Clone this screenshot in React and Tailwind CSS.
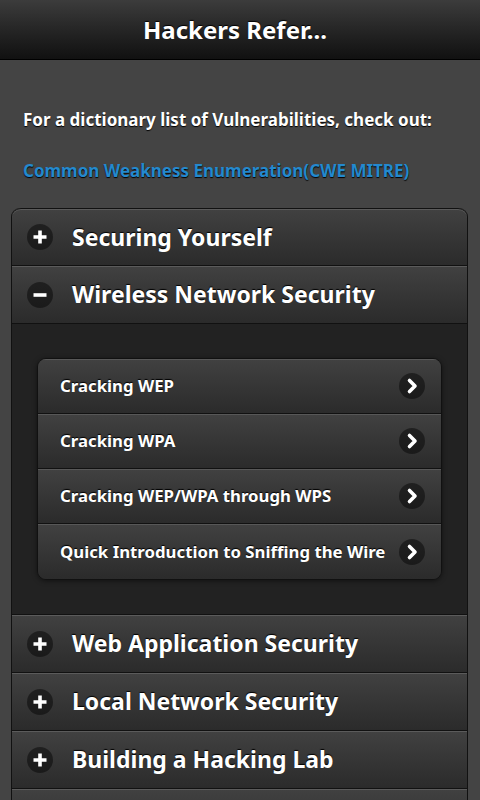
import React from 'react';

const sections = [
  { title: 'Securing Yourself', open: false },
  {
    title: 'Wireless Network Security',
    open: true,
    items: [
      'Cracking WEP',
      'Cracking WPA',
      'Cracking WEP/WPA through WPS',
      'Quick Introduction to Sniffing the Wire',
    ],
  },
  { title: 'Web Application Security', open: false },
  { title: 'Local Network Security', open: false },
  { title: 'Building a Hacking Lab', open: false },
  // next row only peeks in at the bottom of the screen
  { title: '', open: false },
];

const PlusIcon = () => (
  <svg width="26" height="26" viewBox="0 0 26 26">
    <circle cx="13" cy="13" r="13" fill="rgba(0,0,0,0.45)" />
    <path d="M13 6.5v13M6.5 13h13" stroke="#fff" strokeWidth="3.6" strokeLinecap="butt" />
  </svg>
);

const MinusIcon = () => (
  <svg width="26" height="26" viewBox="0 0 26 26">
    <circle cx="13" cy="13" r="13" fill="rgba(0,0,0,0.45)" />
    <path d="M6.5 13h13" stroke="#fff" strokeWidth="3.6" strokeLinecap="butt" />
  </svg>
);

const ArrowIcon = () => (
  <svg width="26" height="26" viewBox="0 0 26 26">
    <circle cx="13" cy="13" r="13" fill="rgba(0,0,0,0.45)" />
    <path d="M10.5 7.5l5.5 5.5-5.5 5.5" fill="none" stroke="#fff" strokeWidth="3.6" strokeLinecap="round" strokeLinejoin="round" />
  </svg>
);

const SectionHeader = ({ title, open, first }) => (
  <div
    className={`flex items-center h-[58px] border-b border-[#111] bg-linear-to-b from-[#414141] to-[#2b2b2b] shadow-[inset_0_1px_0_rgba(255,255,255,0.14)] pl-[15px] ${
      first ? 'rounded-t-[9px] border-t' : ''
    }`}
  >
    {title && (
      <>
        {open ? <MinusIcon /> : <PlusIcon />}
        <span className="ml-[19px] text-[23px] font-bold text-white [text-shadow:0_-1px_1px_#000] leading-none">
          {title}
        </span>
      </>
    )}
  </div>
);

export default function App() {
  return (
    <div className="min-h-[800px] bg-[#444] font-['Noto_Sans','Open_Sans',sans-serif]">
      <div className="h-[60px] flex items-center justify-center border-b border-black bg-linear-to-b from-[#3c3c3c] to-[#111]">
        <h1 className="text-[24px] font-bold text-white [text-shadow:0_-1px_1px_#000] -ml-[10px]">
          Hackers Refer...
        </h1>
      </div>

      <div className="px-[11px] pt-[48px] pb-[20px]">
        <p className="px-[12px] h-[24px] leading-[24px] text-[17px] font-bold text-white [text-shadow:0_1px_1px_#000]">
          For a dictionary list of Vulnerabilities, check out:
        </p>
        <p className="px-[12px] mt-[27px] h-[24px] leading-[24px] text-[17px] font-bold text-[#2489ce] [text-shadow:0_1px_1px_#000]">
          Common Weakness Enumeration(CWE MITRE)
        </p>

        <div className="mt-[25px] w-[457px] border-x border-[#111] rounded-t-[9px]">
          {sections.map((s, i) => (
            <div key={i}>
              <SectionHeader title={s.title} open={s.open} first={i === 0} />
              {s.open && (
                <div className="bg-[#222] border-b border-[#111] pt-[34px] pb-[34px] px-[25px]">
                  <div className="rounded-[9px] border border-[#111] overflow-hidden shadow-[0_1px_5px_rgba(0,0,0,0.5)]">
                    {s.items.map((item, j) => (
                      <div
                        key={item}
                        className={`flex items-center justify-between h-[55px] pl-[22px] pr-[16px] bg-linear-to-b from-[#414141] to-[#2b2b2b] shadow-[inset_0_1px_0_rgba(255,255,255,0.12)] ${
                          j < s.items.length - 1 ? 'border-b border-[#111]' : ''
                        }`}
                      >
                        <span className="text-[16.8px] font-bold text-white [text-shadow:0_-1px_1px_#000]">
                          {item}
                        </span>
                        <ArrowIcon />
                      </div>
                    ))}
                  </div>
                </div>
              )}
            </div>
          ))}
        </div>
      </div>
    </div>
  );
}
